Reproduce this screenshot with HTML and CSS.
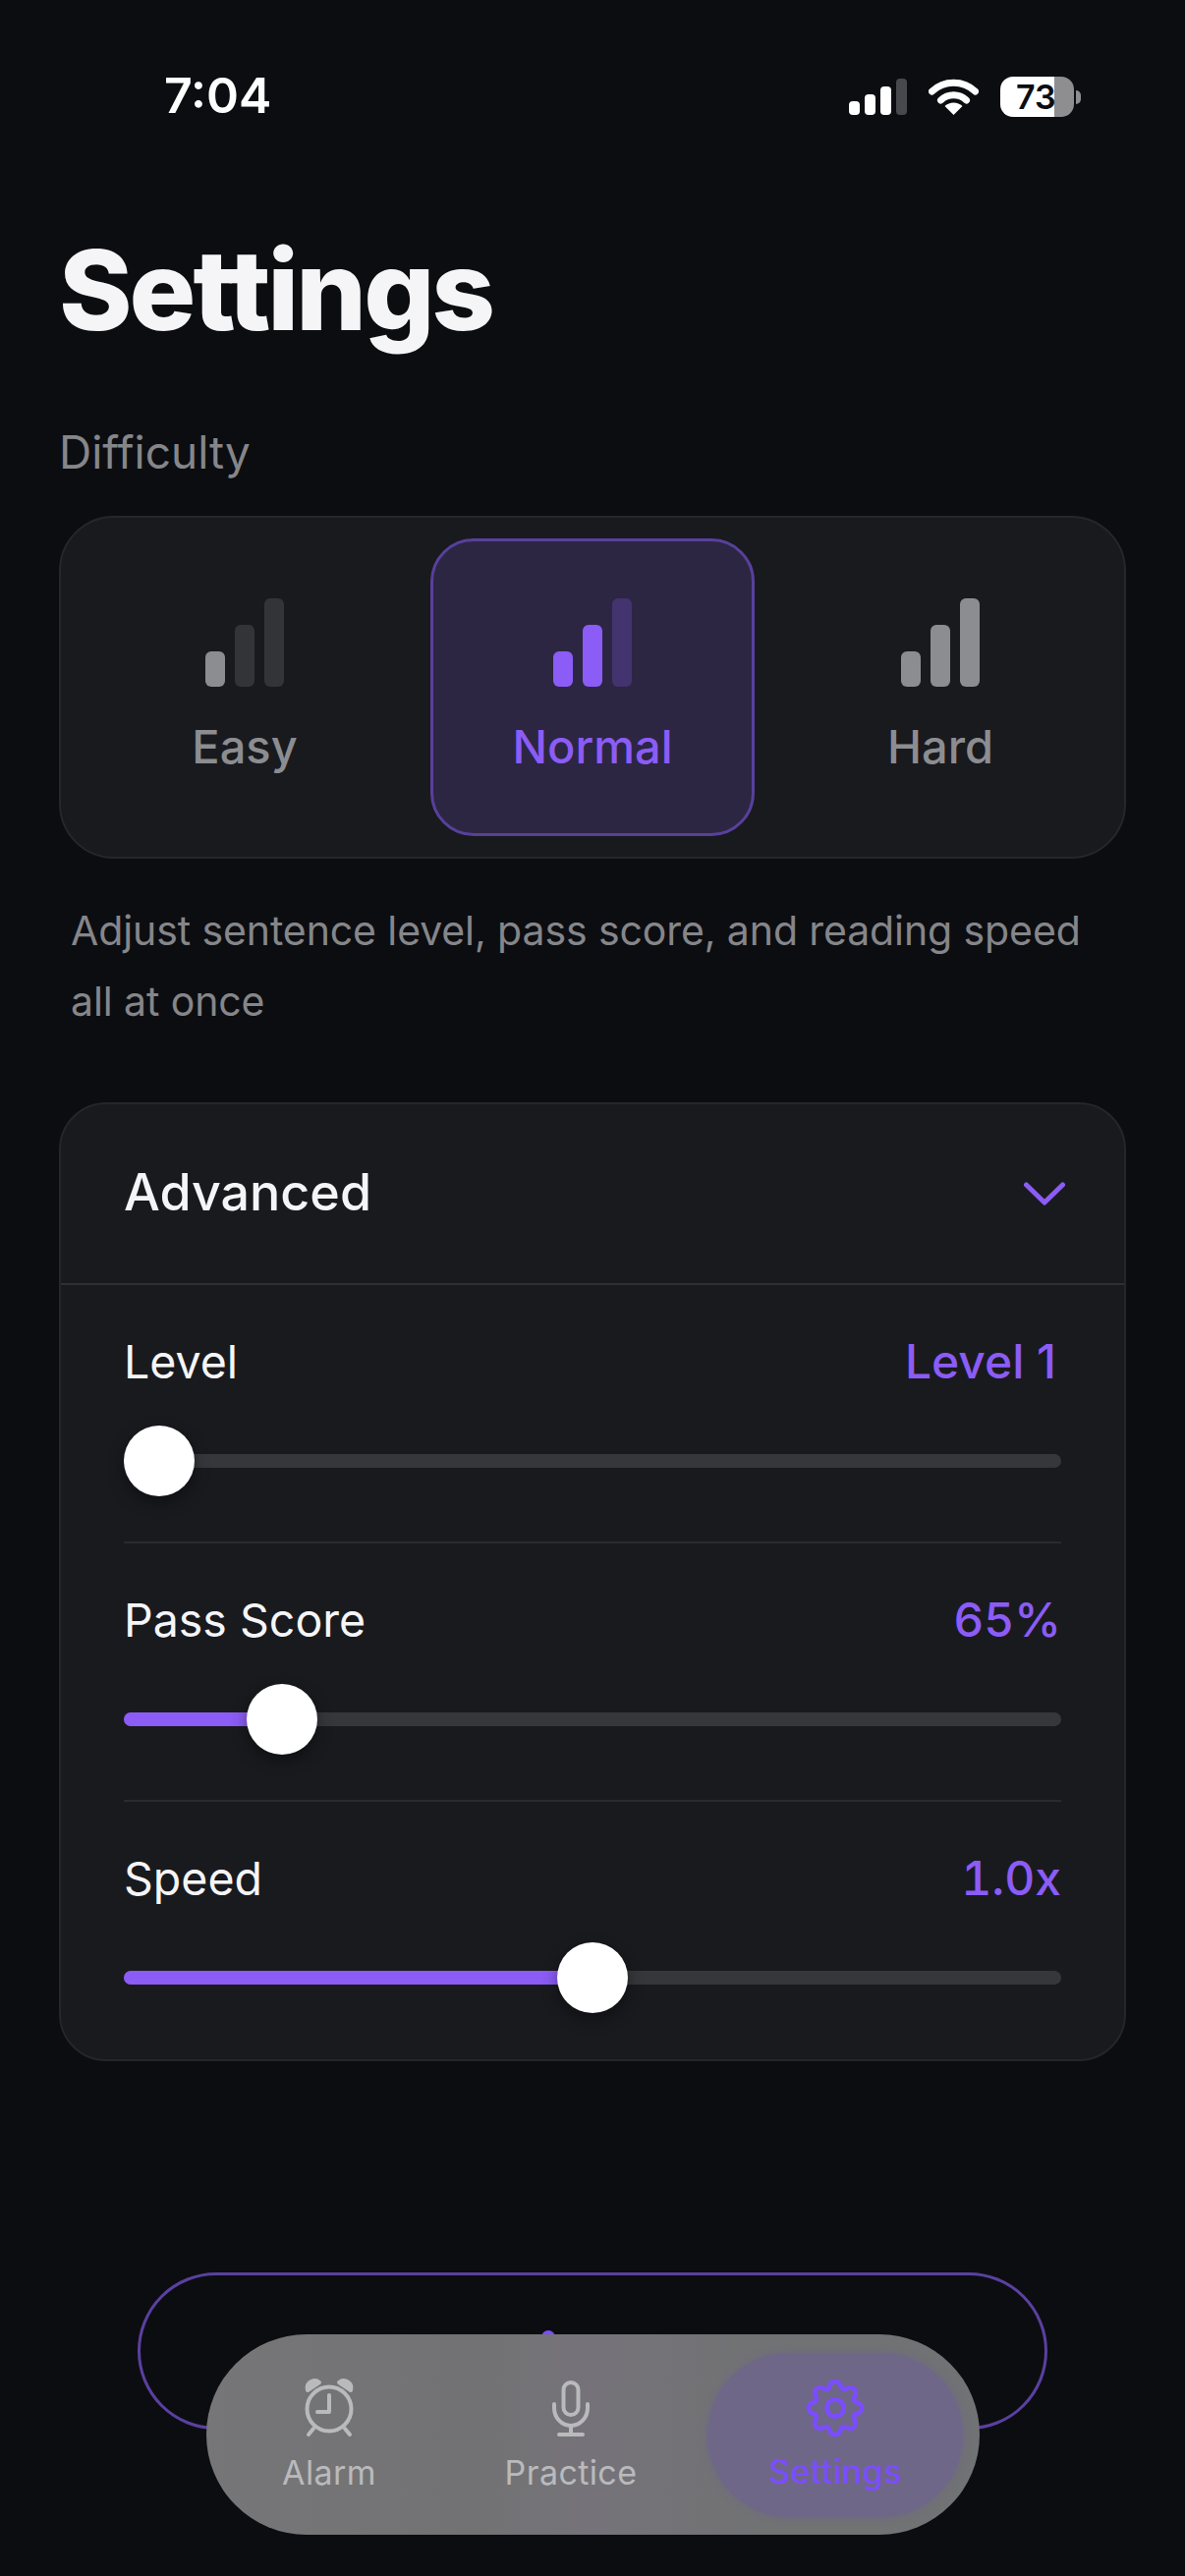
FILE: index.html
```html
<!DOCTYPE html>
<html lang="en">

<head>
  <meta charset="UTF-8" />
  <meta name="viewport" content="width=device-width, initial-scale=1.0" />
  <title>Settings</title>
  <link rel="stylesheet" href="styles.css">
</head>

<body>

  <div class="status-bar">
    <span class="status-time">7:04</span>
    <div class="status-icons">
      <svg width="59" height="38" viewBox="0 0 59 38">
        <rect x="0" y="23" width="11" height="14" rx="4" fill="#fff" />
        <rect x="16" y="16" width="11" height="21" rx="4" fill="#fff" />
        <rect x="32" y="8" width="11" height="29" rx="4" fill="#fff" />
        <rect x="48" y="0" width="11" height="37" rx="4" fill="#48494c" />
      </svg>
      <svg width="51" height="38" viewBox="0 0 50 38">
        <path d="M3 13 A32 32 0 0 1 47 13" fill="none" stroke="#fff" stroke-width="7" stroke-linecap="round" />
        <path d="M12 22 A19 19 0 0 1 38 22" fill="none" stroke="#fff" stroke-width="7" stroke-linecap="round" />
        <path d="M25 37 L16 28 A13 13 0 0 1 34 28 Z" fill="#fff" />
      </svg>
      <div class="battery">
        <div class="battery-body"><span>73</span></div>
        <div class="battery-nub"></div>
      </div>
    </div>
  </div>

  <h1 class="page-title">Settings</h1>

  <div class="section-label">Difficulty</div>

  <div class="difficulty-card">
    <div class="difficulty-option">
      <div class="bars">
        <span class="bar bar-1 on"></span>
        <span class="bar bar-2"></span>
        <span class="bar bar-3"></span>
      </div>
      <div class="difficulty-name">Easy</div>
    </div>
    <div class="difficulty-option selected">
      <div class="bars">
        <span class="bar bar-1 on"></span>
        <span class="bar bar-2 on"></span>
        <span class="bar bar-3"></span>
      </div>
      <div class="difficulty-name">Normal</div>
    </div>
    <div class="difficulty-option">
      <div class="bars">
        <span class="bar bar-1 on"></span>
        <span class="bar bar-2 on"></span>
        <span class="bar bar-3 on"></span>
      </div>
      <div class="difficulty-name">Hard</div>
    </div>
  </div>

  <p class="difficulty-hint">Adjust sentence level, pass score, and reading speed all at once</p>

  <div class="advanced-card">
    <div class="advanced-header">
      <span>Advanced</span>
      <svg width="42" height="24" viewBox="0 0 42 24">
        <path d="M2.5 3 L21 21 L39.5 3" fill="none" stroke="#8b5cf6" stroke-width="5" stroke-linecap="round" stroke-linejoin="round" />
      </svg>
    </div>
    <div class="slider-list">
      <div class="slider-row">
        <div class="slider-head">
          <span>Level</span>
          <span class="slider-value level-value">Level 1</span>
        </div>
        <div class="slider-track">
          <div class="slider-fill" style="width: 36px"></div>
          <div class="slider-thumb"></div>
        </div>
      </div>
      <div class="slider-row">
        <div class="slider-head">
          <span>Pass Score</span>
          <span class="slider-value">65%</span>
        </div>
        <div class="slider-track">
          <div class="slider-fill" style="width: 161px"></div>
          <div class="slider-thumb"></div>
        </div>
      </div>
      <div class="slider-row">
        <div class="slider-head">
          <span>Speed</span>
          <span class="slider-value">1.0x</span>
        </div>
        <div class="slider-track">
          <div class="slider-fill" style="width: 477px"></div>
          <div class="slider-thumb"></div>
        </div>
      </div>
    </div>
  </div>

  <div class="outline-button"><span class="outline-mark"></span></div>

  <nav class="tab-bar">
    <div class="tab">
      <svg width="72" height="72" viewBox="0 0 72 72" fill="none" stroke="#b9babc" stroke-width="4" stroke-linecap="round" stroke-linejoin="round">
        <circle cx="36" cy="36" r="22.5" />
        <path d="M36 22 V39 H24" />
        <path d="M14 17 A7.5 7.5 0 0 1 26 9 Z" fill="#b9babc" />
        <path d="M58 17 A7.5 7.5 0 0 0 46 9 Z" fill="#b9babc" />
        <path d="M20 56 L15 62 M52 56 L57 62" />
      </svg>
      <span>Alarm</span>
    </div>
    <div class="tab">
      <svg width="72" height="72" viewBox="0 0 72 72" fill="none" stroke="#b9babc" stroke-width="4" stroke-linecap="round" stroke-linejoin="round">
        <rect x="28.5" y="9" width="15" height="33" rx="7.5" />
        <path d="M19 31 V35 A17 18 0 0 0 53 35 V31" />
        <path d="M36 53 V62 M24 62 H48" />
      </svg>
      <span>Practice</span>
    </div>
    <div class="tab active">
      <svg width="72" height="72" viewBox="0 0 72 72" fill="none" stroke="#7c4dff" stroke-width="4.6" stroke-linecap="round" stroke-linejoin="round">
        <defs>
          <path id="gear-lobe" d="M31.12 11.48 Q36 6 40.88 11.48 Q42.51 20.29 49.89 15.21" />
        </defs>
        <use href="#gear-lobe" />
        <use href="#gear-lobe" transform="rotate(45 36 36)" />
        <use href="#gear-lobe" transform="rotate(90 36 36)" />
        <use href="#gear-lobe" transform="rotate(135 36 36)" />
        <use href="#gear-lobe" transform="rotate(180 36 36)" />
        <use href="#gear-lobe" transform="rotate(225 36 36)" />
        <use href="#gear-lobe" transform="rotate(270 36 36)" />
        <use href="#gear-lobe" transform="rotate(315 36 36)" />
        <circle cx="36" cy="36" r="8.5" />
      </svg>
      <span>Settings</span>
    </div>
  </nav>

</body>

</html>
```

FILE: styles.css
```css
* {
  box-sizing: border-box;
}

html,
body {
  margin: 0;
  padding: 0;
}

body {
  position: relative;
  width: 1206px;
  height: 2622px;
  padding: 0 60px;
  overflow: hidden;
  background: #0c0d11;
  color: #f5f5f8;
  font-family: 'Inter', 'Liberation Sans', sans-serif;
}

/* Status bar */
.status-bar {
  height: 235px;
  padding: 70px 0 0 107px;
  display: flex;
  justify-content: space-between;
  align-items: flex-start;
}

.status-time {
  font-size: 50px;
  line-height: 54px;
  font-weight: 600;
  color: #fff;
}

.status-icons {
  display: flex;
  align-items: center;
  gap: 22px;
  padding-top: 8px;
  margin-right: 46px;
}

.battery {
  display: flex;
  align-items: center;
  gap: 2px;
}

.battery-body {
  width: 75px;
  height: 41px;
  border-radius: 13px;
  background: linear-gradient(to right, #fff 0, #fff 73%, #8e8e90 73%, #8e8e90 100%);
  color: #0c0d11;
  font-size: 34px;
  font-weight: 600;
  line-height: 41px;
  padding-left: 16px;
}

.battery-nub {
  width: 5px;
  height: 14px;
  border-radius: 0 6px 6px 0;
  background: #8e8e90;
}

/* Title */
.page-title {
  margin: 0;
  font-size: 113px;
  line-height: 120px;
  font-weight: 800;
  letter-spacing: -3px;
}

.section-label {
  margin-top: 77px;
  font-size: 46px;
  line-height: 56px;
  color: #85868a;
}

/* Difficulty */
.difficulty-card {
  margin-top: 37px;
  height: 349px;
  padding: 21px 22px;
  display: grid;
  grid-template-columns: repeat(3, 1fr);
  gap: 24px;
  background: #191a1e;
  border: 2px solid #26272b;
  border-radius: 56px;
}

.difficulty-option {
  display: flex;
  flex-direction: column;
  align-items: center;
  justify-content: center;
  padding-bottom: 2px;
  border-radius: 44px;
  border: 3px solid transparent;
  color: #8c8d91;
}

.difficulty-option.selected {
  background: #2c2642;
  border-color: #58409c;
  color: #8b5cf6;
}

.bars {
  display: flex;
  align-items: flex-end;
  gap: 10px;
  height: 90px;
}

.bar {
  width: 20px;
  border-radius: 6px;
  background: #333438;
}

.bar.on {
  background: #8c8d91;
}

.bar-1 {
  height: 36px;
}

.bar-2 {
  height: 63px;
}

.bar-3 {
  height: 90px;
}

.selected .bar {
  background: #43336f;
}

.selected .bar.on {
  background: #8b5cf6;
}

.difficulty-name {
  margin-top: 33px;
  font-size: 47px;
  line-height: 56px;
  font-weight: 500;
}

.difficulty-hint {
  margin: 37px 0 0 12px;
  font-size: 41px;
  line-height: 72px;
  letter-spacing: -0.1px;
  color: #85868a;
}

/* Advanced */
.advanced-card {
  margin-top: 67px;
  height: 976px;
  background: #191a1e;
  border: 2px solid #25262a;
  border-radius: 48px;
}

.advanced-header {
  height: 184px;
  padding: 0 60px 4px 64px;
  display: flex;
  justify-content: space-between;
  align-items: center;
  border-bottom: 2px solid #2e2f33;
  font-size: 52px;
  font-weight: 500;
}

.advanced-header svg {
  margin-top: 4px;
}

.slider-list {
  padding: 0 64px;
}

.slider-row {
  height: 263px;
  padding-top: 50px;
  border-bottom: 2px solid #2a2b2f;
}

.slider-row:last-child {
  border-bottom: none;
}

.slider-head {
  display: flex;
  justify-content: space-between;
  font-size: 46.5px;
  line-height: 56px;
  font-weight: 400;
}

.slider-value {
  color: #8b5cf6;
  font-size: 48px;
  font-weight: 500;
  font-variant-numeric: tabular-nums;
}

.level-value {
  margin-right: 5px;
  font-variant-numeric: normal;
}

.slider-track {
  position: relative;
  display: flex;
  margin-top: 66px;
  height: 14px;
  border-radius: 7px;
  background: #36373b;
}

.slider-fill {
  height: 14px;
  border-radius: 7px;
  background: #8b5cf6;
}

.slider-thumb {
  width: 72px;
  height: 72px;
  flex: none;
  margin: -29px 0 0 -36px;
  border-radius: 50%;
  background: #fff;
  box-shadow: 0 6px 16px rgba(0, 0, 0, 0.4);
}

/* Bottom */
.outline-button {
  margin: 215px auto 0;
  width: 926px;
  height: 160px;
  border: 3px solid #5a40a0;
  border-radius: 80px;
  display: flex;
  justify-content: center;
}

.outline-mark {
  width: 14px;
  height: 14px;
  margin: 56px 90px 0 0;
  border-radius: 50%;
  background: #7c4dff;
}

.tab-bar {
  position: absolute;
  left: 210px;
  top: 2376px;
  width: 787px;
  height: 204px;
  padding: 0 17px 0 18px;
  display: grid;
  grid-template-columns: 214px 278px 1fr;
  border-radius: 102px;
  background: linear-gradient(to right, #767678 0, #727274 35%, #757379 50%, #717274 72%, #717274 100%);
}

.tab {
  display: flex;
  flex-direction: column;
  align-items: center;
  padding-top: 40px;
  color: #b9babc;
  font-size: 34px;
  line-height: 44px;
  letter-spacing: 0.4px;
}

.tab span {
  margin-top: 7px;
}

.tab.active {
  margin: 19px 0 18px 0;
  padding-top: 20px;
  border-radius: 84px;
  background: #6e6787;
  box-shadow: 0 0 8px #6e6787;
  color: #7c4dff;
  font-weight: 500;
}
```
